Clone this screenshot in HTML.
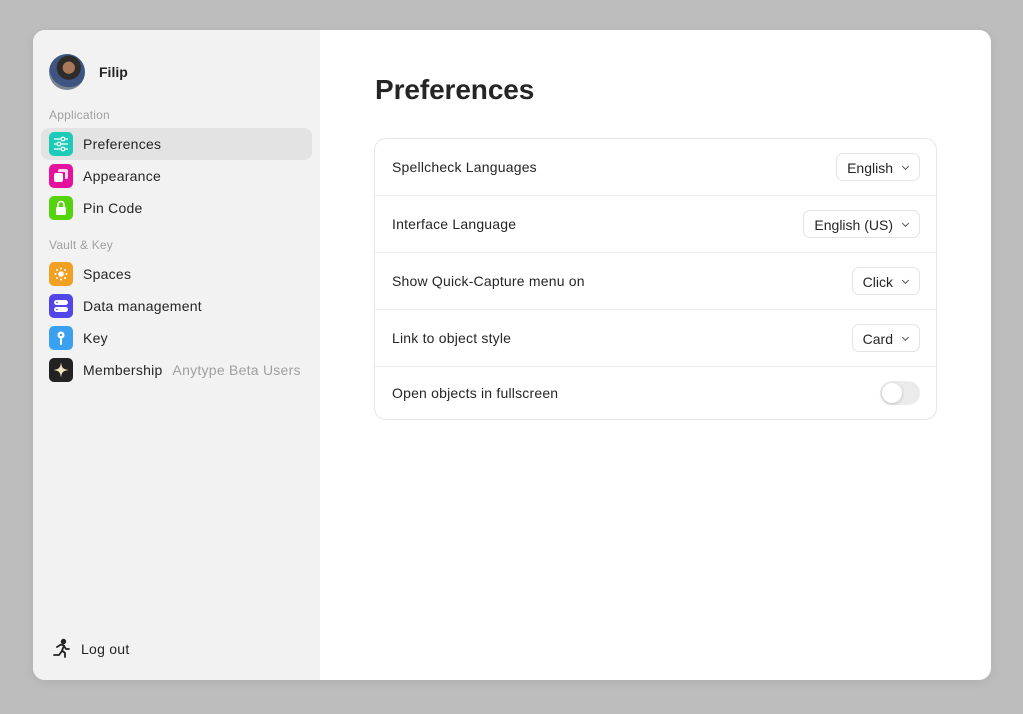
<!DOCTYPE html>
<html><head><style>
*{box-sizing:border-box;margin:0;padding:0}
body{width:1023px;height:714px;background:#bdbdbd;font-family:"Liberation Sans",sans-serif;position:relative;overflow:hidden;color:#252525}
.win{position:absolute;left:33px;top:30px;width:958px;height:650px;border-radius:12px;overflow:hidden;background:#fff;box-shadow:0 2px 10px rgba(0,0,0,.08)}
.side{position:absolute;left:0;top:0;width:287px;height:650px;background:#f2f2f2}
.av{position:absolute;left:16px;top:24px;width:36px;height:36px;border-radius:50%;background:radial-gradient(circle at 55% 38%,#a8785c 0 20%,#2e2b2a 21% 40%,#3d5580 41% 65%,#7a8590 66%)}
.name{position:absolute;left:66px;top:34px;font-size:14px;font-weight:bold}
.sec{position:absolute;left:16px;font-size:12px;color:#a0a0a0;letter-spacing:.2px}
.item{position:absolute;left:8px;width:271px;height:32px;border-radius:8px;font-size:14px;letter-spacing:.25px}
.item.sel{background:#e3e3e3}
.ic{position:absolute;left:8px;top:4px;width:24px;height:24px;border-radius:5px}
.item span{position:absolute;left:42px;top:8px;white-space:nowrap}
.item i{font-style:normal;color:#a0a0a0;margin-left:10px}
.main{position:absolute;left:287px;top:0}
h1{position:absolute;left:55px;top:44px;font-size:28px;font-weight:bold;white-space:nowrap;letter-spacing:-.1px}
.card{position:absolute;left:54px;top:108px;width:563px;height:282px;border:1px solid #e6e6e6;border-radius:12px}
.row{position:absolute;left:0;width:561px;height:57px;border-bottom:1px solid #ececec;font-size:14px;letter-spacing:.2px}
.row .l{position:absolute;left:17px;top:20px}
.sel2{position:absolute;right:16px;top:14px;height:28px;border:1px solid #e3e3e3;border-radius:7px;padding:6px 26px 0 10px;font-size:14px;letter-spacing:0}
.sel2:after{content:"";position:absolute;right:11px;top:10px;width:4px;height:4px;border-right:1px solid #555;border-bottom:1px solid #555;transform:rotate(45deg)}
.tog{position:absolute;right:16px;top:14px;width:40px;height:24px;border-radius:12px;background:#ebebeb}
.tog:after{content:"";position:absolute;left:2px;top:2px;width:20px;height:20px;border-radius:50%;background:#fff;box-shadow:0 1px 3px rgba(0,0,0,.2)}
</style></head><body>
<div class="win">
<div class="side">
<div class="av"></div><div class="name">Filip</div>
<div class="sec" style="top:78px">Application</div>
<div class="item sel" style="top:98px"><div class="ic" style="background:#1ecbb8"><svg width="24" height="24" stroke="#fff" fill="none" stroke-width="1.2"><path d="M5 7h14M5 12h14M5 17h14"/><circle cx="14" cy="7" r="1.8" fill="#1ecbb8"/><circle cx="10" cy="12" r="1.8" fill="#1ecbb8"/><circle cx="14" cy="17" r="1.8" fill="#1ecbb8"/></svg></div><span>Preferences</span></div>
<div class="item" style="top:130px"><div class="ic" style="background:#e5119c"><svg width="24" height="24" fill="#fff"><rect x="5" y="9" width="9" height="9" rx="2"/><path d="M9 8V7a2 2 0 0 1 2-2h6a2 2 0 0 1 2 2v6a2 2 0 0 1-2 2h-1V9a1 1 0 0 0-1-1z" opacity=".85"/></svg></div><span>Appearance</span></div>
<div class="item" style="top:162px"><div class="ic" style="background:#55d40d"><svg width="24" height="24"><path d="M9 11V8.5a3 3 0 0 1 6 0V11" stroke="#fff" stroke-width="1.6" fill="none"/><rect x="7" y="11" width="10" height="8" rx="1.5" fill="#fff"/></svg></div><span>Pin Code</span></div>
<div class="sec" style="top:208px">Vault &amp; Key</div>
<div class="item" style="top:228px"><div class="ic" style="background:#f2a024"><svg width="24" height="24" fill="#fff"><circle cx="12" cy="12" r="2.8"/><circle cx="12" cy="6.5" r="1"/><circle cx="12" cy="17.5" r="1"/><circle cx="6.5" cy="12" r="1"/><circle cx="17.5" cy="12" r="1"/><circle cx="8" cy="8" r="1"/><circle cx="16" cy="8" r="1"/><circle cx="8" cy="16" r="1"/><circle cx="16" cy="16" r="1"/></svg></div><span>Spaces</span></div>
<div class="item" style="top:260px"><div class="ic" style="background:#5246e8"><svg width="24" height="24" fill="#fff"><rect x="5" y="6" width="14" height="5" rx="2.5"/><rect x="5" y="13" width="14" height="5" rx="2.5"/><circle cx="8" cy="8.5" r=".8" fill="#5246e8"/><circle cx="8" cy="15.5" r=".8" fill="#5246e8"/></svg></div><span>Data management</span></div>
<div class="item" style="top:292px"><div class="ic" style="background:#3aa0f0"><svg width="24" height="24" fill="#fff"><circle cx="12" cy="9" r="3.5"/><rect x="11" y="11" width="2" height="8" rx="1"/><circle cx="12" cy="9" r="1.2" fill="#3aa0f0"/></svg></div><span>Key</span></div>
<div class="item" style="top:324px"><div class="ic" style="background:#222"><svg width="24" height="24"><path d="M12 4.5C12.8 10 14 11.2 19.5 12 14 12.8 12.8 14 12 19.5 11.2 14 10 12.8 4.5 12 10 11.2 11.2 10 12 4.5z" fill="#f6e3bf"/></svg></div><span>Membership<i>Anytype Beta Users</i></span></div>
<svg style="position:absolute;left:18px;top:608px" width="20" height="22" fill="none" stroke="#222" stroke-width="1.8" stroke-linecap="round" stroke-linejoin="round"><circle cx="12.5" cy="3.5" r="1.8" fill="#222"/><path d="M6 9l4-2.5 3 1-2 5 3 2.5v4M11 13l-3 4H3M13 8l2 3h3"/></svg>
<div style="position:absolute;left:48px;top:611px;font-size:14px;letter-spacing:.25px">Log out</div>
</div>
<div class="main">
<h1>Preferences</h1>
<div class="card">
<div class="row" style="top:0"><div class="l">Spellcheck Languages</div><div class="sel2">English</div></div>
<div class="row" style="top:57px"><div class="l">Interface Language</div><div class="sel2">English (US)</div></div>
<div class="row" style="top:114px"><div class="l">Show Quick-Capture menu on</div><div class="sel2">Click</div></div>
<div class="row" style="top:171px"><div class="l">Link to object style</div><div class="sel2">Card</div></div>
<div class="row" style="top:228px;border:none;height:52px"><div class="l" style="top:18px">Open objects in fullscreen</div><div class="tog" style="top:14px"></div></div>
</div>
</div>
</div>
</body></html>
